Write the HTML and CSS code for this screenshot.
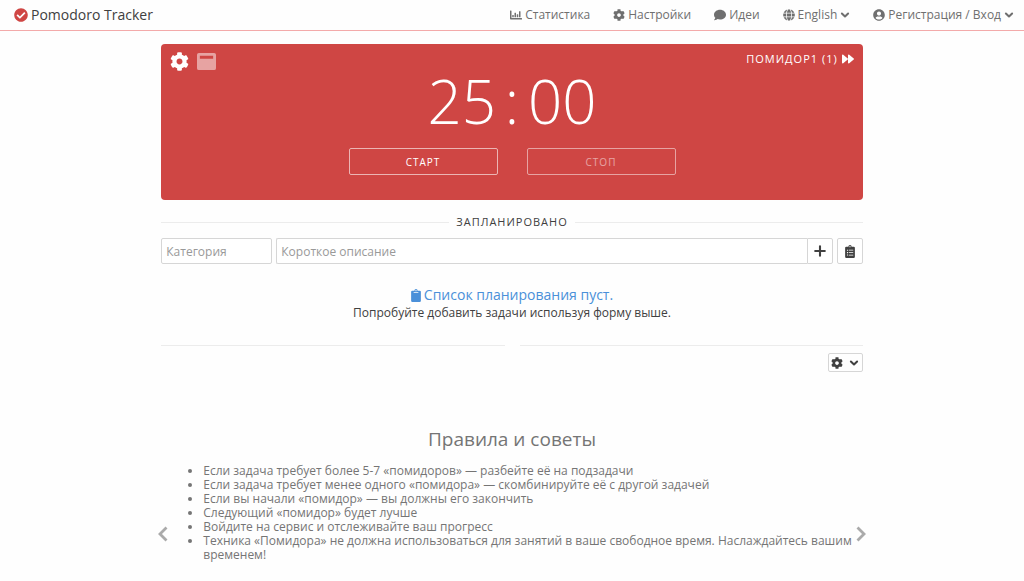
FILE: index.html
```html
<!DOCTYPE html>
<html lang="ru">
<head>
  <meta charset="UTF-8">
  <meta name="viewport" content="width=device-width, initial-scale=1.0">
  <title>Pomodoro Tracker</title>
  <link rel="stylesheet" href="styles.css">
</head>
<body>
  <svg class="sprite" aria-hidden="true">
    <symbol id="i-check" viewBox="0 0 512 512"><path d="M504 256c0 136.967-111.033 248-248 248S8 392.967 8 256 119.033 8 256 8s248 111.033 248 248zM227.314 387.314l184-184c6.248-6.248 6.248-16.379 0-22.627l-22.627-22.627c-6.248-6.249-16.379-6.249-22.628 0L216 308.118l-70.059-70.059c-6.248-6.248-16.379-6.248-22.628 0l-22.627 22.627c-6.248 6.248-6.248 16.379 0 22.627l104 104c6.249 6.249 16.379 6.249 22.628.001z"/></symbol>
    <symbol id="i-chart" viewBox="0 0 512 512"><path d="M16 64h32q16 0 16 16v304h432q16 0 16 16v32q0 16-16 16H32q-32 0-32-32V80q0-16 16-16zM109 256h38q13 0 13 13v70q0 13-13 13h-38q-13 0-13-13v-70q0-13 13-13zM205 160h38q13 0 13 13v166q0 13-13 13h-38q-13 0-13-13V173q0-13 13-13zM301 224h38q13 0 13 13v102q0 13-13 13h-38q-13 0-13-13V237q0-13 13-13zM397 96h38q13 0 13 13v230q0 13-13 13h-38q-13 0-13-13V109q0-13 13-13z"/></symbol>
    <symbol id="i-cog" viewBox="0 0 512 512"><path d="M487.4 315.7l-42.6-24.6c4.3-23.2 4.3-47 0-70.2l42.6-24.6c4.9-2.8 7.1-8.6 5.5-14-11.1-35.6-30-67.8-54.7-94.6-3.8-4.1-10-5.1-14.8-2.3L380.8 110c-17.9-15.4-38.5-27.3-60.8-35.1V25.8c0-5.6-3.9-10.5-9.4-11.7-36.7-8.2-74.3-7.8-109.2 0-5.5 1.2-9.4 6.1-9.4 11.7V75c-22.2 7.9-42.8 19.8-60.8 35.1L88.7 85.5c-4.9-2.8-11-1.9-14.8 2.3-24.7 26.7-43.6 58.9-54.7 94.6-1.7 5.4.6 11.2 5.5 14L67.3 221c-4.3 23.2-4.3 47 0 70.2l-42.6 24.6c-4.9 2.8-7.1 8.6-5.5 14 11.1 35.6 30 67.8 54.7 94.6 3.8 4.1 10 5.1 14.8 2.3l42.6-24.6c17.9 15.4 38.5 27.3 60.8 35.1v49.2c0 5.6 3.9 10.5 9.4 11.7 36.7 8.2 74.3 7.8 109.2 0 5.5-1.2 9.4-6.1 9.4-11.7v-49.2c22.2-7.9 42.8-19.8 60.8-35.1l42.6 24.6c4.9 2.8 11 1.9 14.8-2.3 24.7-26.7 43.6-58.9 54.7-94.6 1.5-5.5-.7-11.3-5.6-14.1zM256 336c-44.1 0-80-35.9-80-80s35.9-80 80-80 80 35.9 80 80-35.9 80-80 80z"/></symbol>
    <symbol id="i-comment" viewBox="0 0 512 512"><path d="M256 32C114.6 32 0 125.1 0 240c0 49.6 21.4 95 57 130.7C44.5 421.1 2.7 466 2.2 466.5c-2.2 2.3-2.8 5.7-1.5 8.7S4.8 480 8 480c66.3 0 116-31.8 140.6-51.4 32.7 12.3 69 19.4 107.4 19.4 141.4 0 256-93.1 256-208S397.4 32 256 32z"/></symbol>
    <symbol id="i-globe" viewBox="0 0 496 512"><path d="M336.5 160C322 70.7 287.8 8 248 8s-74 62.7-88.5 152h177zM152 256c0 22.2 1.2 43.5 3.3 64h185.3c2.1-20.5 3.3-41.8 3.3-64s-1.2-43.5-3.3-64H155.3c-2.1 20.5-3.3 41.8-3.3 64zm324.7-96c-28.6-67.9-86.5-120.4-158-141.6 24.4 33.8 41.2 84.7 50 141.6h108zM177.2 18.4C105.8 39.6 47.8 92.1 19.3 160h108c8.7-56.9 25.5-107.8 49.9-141.6zM487.4 192H372.7c2.1 21 3.3 42.5 3.3 64s-1.2 43-3.3 64h114.6c5.5-20.5 8.6-41.8 8.6-64s-3.1-43.5-8.5-64zM120 256c0-21.5 1.2-43 3.3-64H8.6C3.2 212.5 0 233.8 0 256s3.2 43.5 8.6 64h114.6c-2-21-3.2-42.5-3.2-64zm39.5 96c14.5 89.3 48.7 152 88.5 152s74-62.7 88.5-152h-177zm159.3 141.6c71.4-21.2 129.4-73.7 158-141.6h-108c-8.8 56.9-25.6 107.8-50 141.6zM19.3 352c28.6 67.9 86.5 120.4 158 141.6-24.4-33.8-41.2-84.7-50-141.6h-108z"/></symbol>
    <symbol id="i-user" viewBox="0 0 496 512"><path d="M248 8C111 8 0 119 0 256s111 248 248 248 248-111 248-248S385 8 248 8zm0 96c48.6 0 88 39.4 88 88s-39.4 88-88 88-88-39.4-88-88 39.4-88 88-88zm0 344c-58.7 0-111.3-26.6-146.5-68.2 18.8-35.4 55.6-59.8 98.5-59.8 2.4 0 4.8.4 7.1 1.1 13 4.2 26.6 6.9 40.9 6.9 14.3 0 28-2.7 40.9-6.9 2.3-.7 4.7-1.1 7.1-1.1 42.9 0 79.7 24.4 98.5 59.8C359.3 421.4 306.7 448 248 448z"/></symbol>
    <symbol id="i-down" viewBox="0 0 16 16"><path d="M3 5.500 8 10.500 13 5.500" fill="none" stroke="currentColor" stroke-width="3.200" stroke-linecap="round" stroke-linejoin="round"/></symbol>
    <symbol id="i-forward" viewBox="0 0 512 512"><path d="M500.5 231.4l-192-160C287.9 54.3 256 68.6 256 96v320c0 27.4 31.9 41.8 52.5 24.6l192-160c15.3-12.8 15.3-36.4 0-49.2zm-256 0l-192-160C31.9 54.3 0 68.6 0 96v320c0 27.4 31.9 41.8 52.5 24.6l192-160c15.3-12.8 15.3-36.4 0-49.2z"/></symbol>
    <symbol id="i-window" viewBox="0 0 20 18"><path fill-rule="evenodd" d="M2 0h16q2 0 2 2v14q0 2-2 2H2q-2 0-2-2V2q0-2 2-2zM3 3v3h14V3z"/></symbol>
    <symbol id="i-plus" viewBox="0 0 16 16"><path d="M8 2.5v11M2.500 8h11" fill="none" stroke="currentColor" stroke-width="2.4" stroke-linecap="round"/></symbol>
    <symbol id="i-clipboard" viewBox="0 0 384 512"><path fill-rule="evenodd" d="M336 64h-80a64 64 0 0 0-128 0H48Q0 64 0 112v352q0 48 48 48h288q48 0 48-48V112q0-48-48-48zM192 40a24 24 0 1 1 0 48 24 24 0 0 1 0-48zM108 128h168q12 0 12 12v8q0 12-12 12H108q-12 0-12-12v-8q0-12 12-12z"/></symbol>
    <symbol id="i-tasks" viewBox="0 0 384 512"><path fill-rule="evenodd" d="M336 64h-80a64 64 0 0 0-128 0H48Q0 64 0 112v352q0 48 48 48h288q48 0 48-48V112q0-48-48-48zM192 40a24 24 0 1 1 0 48 24 24 0 0 1 0-48zM72 184h40v40H72zM144 190h176v28H144zM72 280h40v40H72zM144 286h176v28H144zM72 376h40v40H72zM144 382h176v28H144z"/></symbol>
    <symbol id="i-left" viewBox="0 0 10 16"><path d="M8.500 1.500 2 8l6.500 6.500" fill="none" stroke="currentColor" stroke-width="2.800"/></symbol>
    <symbol id="i-right" viewBox="0 0 10 16"><path d="M1.500 1.500 8 8l-6.500 6.500" fill="none" stroke="currentColor" stroke-width="2.800"/></symbol>
  </svg>

  <header class="navbar">
    <a class="brand" href="#"><svg class="icon brand-icon"><use href="#i-check"/></svg>Pomodoro Tracker</a>
    <nav class="menu">
      <a href="#"><svg class="icon"><use href="#i-chart"/></svg>Статистика</a>
      <a href="#"><svg class="icon"><use href="#i-cog"/></svg>Настройки</a>
      <a href="#"><svg class="icon"><use href="#i-comment"/></svg>Идеи</a>
      <a href="#"><svg class="icon"><use href="#i-globe"/></svg>English<svg class="caret"><use href="#i-down"/></svg></a>
      <a href="#"><svg class="icon"><use href="#i-user"/></svg>Регистрация / Вход<svg class="caret"><use href="#i-down"/></svg></a>
    </nav>
  </header>

  <main class="container">
    <section class="timer">
      <div class="timer-top">
        <div class="timer-tools">
          <button type="button" aria-label="Настройки таймера"><svg class="tool-icon"><use href="#i-cog"/></svg></button>
          <button type="button" class="faded" aria-label="Окно таймера"><svg class="tool-icon"><use href="#i-window"/></svg></button>
        </div>
        <button type="button" class="next">ПОМИДОР1 (1)<svg class="icon"><use href="#i-forward"/></svg></button>
      </div>
      <div class="clock"><span>25</span><span class="colon">:</span><span>00</span></div>
      <div class="timer-actions">
        <button type="button" class="action">СТАРТ</button>
        <button type="button" class="action" disabled>СТОП</button>
      </div>
    </section>

    <h2 class="divider">ЗАПЛАНИРОВАНО</h2>

    <form class="task-form">
      <input class="category" type="text" placeholder="Категория" aria-label="Категория">
      <div class="input-group">
        <input type="text" placeholder="Короткое описание" aria-label="Короткое описание">
        <button type="button" aria-label="Добавить"><svg class="plus"><use href="#i-plus"/></svg></button>
      </div>
      <button type="button" class="list-btn" aria-label="Список задач"><svg class="clip"><use href="#i-tasks"/></svg></button>
    </form>

    <div class="empty">
      <p class="empty-title"><svg class="clip"><use href="#i-clipboard"/></svg>Список планирования пуст.</p>
      <p>Попробуйте добавить задачи используя форму выше.</p>
    </div>

    <div class="divider divider-empty"></div>

    <div class="options">
      <button type="button" aria-label="Параметры"><svg class="icon"><use href="#i-cog"/></svg><svg class="caret"><use href="#i-down"/></svg></button>
    </div>

    <section class="rules">
      <h3>Правила и советы</h3>
      <div class="slider">
        <button type="button" aria-label="Назад"><svg class="arrow"><use href="#i-left"/></svg></button>
        <ul>
          <li>Если задача требует более 5-7 «помидоров» — разбейте её на подзадачи</li>
          <li>Если задача требует менее одного «помидора» — скомбинируйте её с другой задачей</li>
          <li>Если вы начали «помидор» — вы должны его закончить</li>
          <li>Следующий «помидор» будет лучше</li>
          <li>Войдите на сервис и отслеживайте ваш прогресс</li>
          <li>Техника «Помидора» не должна использоваться для занятий в ваше свободное время. Наслаждайтесь вашим временем!</li>
        </ul>
        <button type="button" aria-label="Вперёд"><svg class="arrow"><use href="#i-right"/></svg></button>
      </div>
    </section>
  </main>
</body>
</html>
```

FILE: styles.css
```css
* {
  box-sizing: border-box;
}
body {
  margin: 0;
  background-color: #fefefe;
  font-family: "Open Sans", "Noto Sans", sans-serif;
  font-size: 12px;
  line-height: 18px;
  color: #404040;
}
button, input {
  font: inherit;
  color: inherit;
}
button {
  display: flex;
  align-items: center;
  justify-content: center;
  padding: 0;
  border: 0;
  background: none;
  cursor: pointer;
}
svg {
  flex: none;
  fill: currentColor;
}
p {
  margin: 0;
}
.sprite {
  display: none;
}
.icon {
  width: 12px;
  height: 12px;
}
.caret {
  width: 10px;
  height: 10px;
}

/* header */
.navbar {
  display: flex;
  align-items: center;
  justify-content: space-between;
  height: 31px;
  padding: 0 10px 0 14px;
  border-bottom: 1px solid #f3aaaa;
}
.navbar a {
  display: flex;
  align-items: center;
  text-decoration: none;
}
.navbar .brand {
  gap: 3px;
  font-size: 14px;
  color: #404040;
}
.brand-icon {
  width: 14px;
  height: 14px;
  color: #cf4644;
}
.menu {
  display: flex;
  gap: 23px;
}
.menu a {
  gap: 3px;
  color: #6f6f6f;
}

.container {
  width: 68.5%;
  max-width: 1024px;
  margin: 13px auto 0;
}

/* timer */
.timer {
  padding: 6px 9px 25px;
  border-radius: 4px;
  background-color: #cf4644;
  color: #fff;
}
.timer-top, .timer-tools {
  display: flex;
  justify-content: space-between;
}
.timer-tools {
  gap: 8px;
  padding-top: 2px;
}
.tool-icon {
  width: 19px;
  height: 19px;
}
.faded {
  opacity: 0.5;
}
.next {
  gap: 4px;
  height: 18px;
  font-size: 11px;
  letter-spacing: 1px;
}
.clock {
  display: flex;
  justify-content: center;
  font-size: 60px;
  font-weight: 300;
  line-height: 60px;
}
.colon {
  width: 32px;
  text-align: center;
}
.timer-actions {
  display: flex;
  justify-content: center;
  gap: 29px;
  margin-top: 17px;
}
.action {
  width: 149px;
  height: 27px;
  border: 1px solid #ecb5b4;
  border-radius: 2px;
  font-size: 10px;
  letter-spacing: 1px;
}
.action:disabled {
  opacity: 0.5;
  border-color: #fff;
  cursor: default;
}

/* planning */
.divider {
  display: flex;
  align-items: center;
  gap: 7px;
  margin: 13px 0 7px;
  font-size: 11px;
  font-weight: 400;
  letter-spacing: 1px;
}
.divider::before, .divider::after {
  content: "";
  flex: 1;
  height: 1px;
  background-color: #ececec;
}
.task-form {
  display: flex;
  gap: 4px;
}
.task-form input, .task-form button {
  height: 26px;
  border: 1px solid #d6d6d6;
  border-radius: 2px;
  background-color: #fff;
}
.task-form input {
  min-width: 0;
  padding: 0 4px;
}
.task-form input::placeholder {
  color: #999;
}
.task-form button {
  width: 26px;
}
.category {
  width: 111px;
}
.input-group {
  display: flex;
  flex: 1;
}
.input-group input {
  flex: 1;
  border-right: 0;
  border-radius: 2px 0 0 2px;
}
.input-group button {
  border-radius: 0 2px 2px 0;
}
.plus {
  width: 14px;
  height: 14px;
}
.clip {
  width: 10px;
  height: 13px;
}
.empty {
  margin-top: 22px;
  text-align: center;
}
.empty-title {
  display: flex;
  align-items: center;
  justify-content: center;
  gap: 3px;
  font-size: 14px;
  color: #4a90d9;
}
.divider-empty {
  gap: 15px;
  margin: 23px 0 7px;
}
.options {
  display: flex;
  justify-content: flex-end;
}
.options button {
  gap: 6px;
  width: 35px;
  height: 19px;
  border: 1px solid #d6d6d6;
  border-radius: 2px;
}

/* rules */
.rules {
  margin-top: 55px;
  color: #757575;
}
.rules h3 {
  margin: 0;
  font-size: 19px;
  font-weight: 400;
  line-height: 24px;
  text-align: center;
}
.slider {
  display: flex;
  align-items: flex-end;
  margin: 0 -3px;
}
.slider ul {
  flex: 1;
  margin: 13px 0 0;
  padding-left: 35px;
  line-height: 14px;
}
.slider button {
  height: 18px;
  margin-bottom: 19px;
  color: #aaa;
}
.arrow {
  width: 10px;
  height: 16px;
}
```
